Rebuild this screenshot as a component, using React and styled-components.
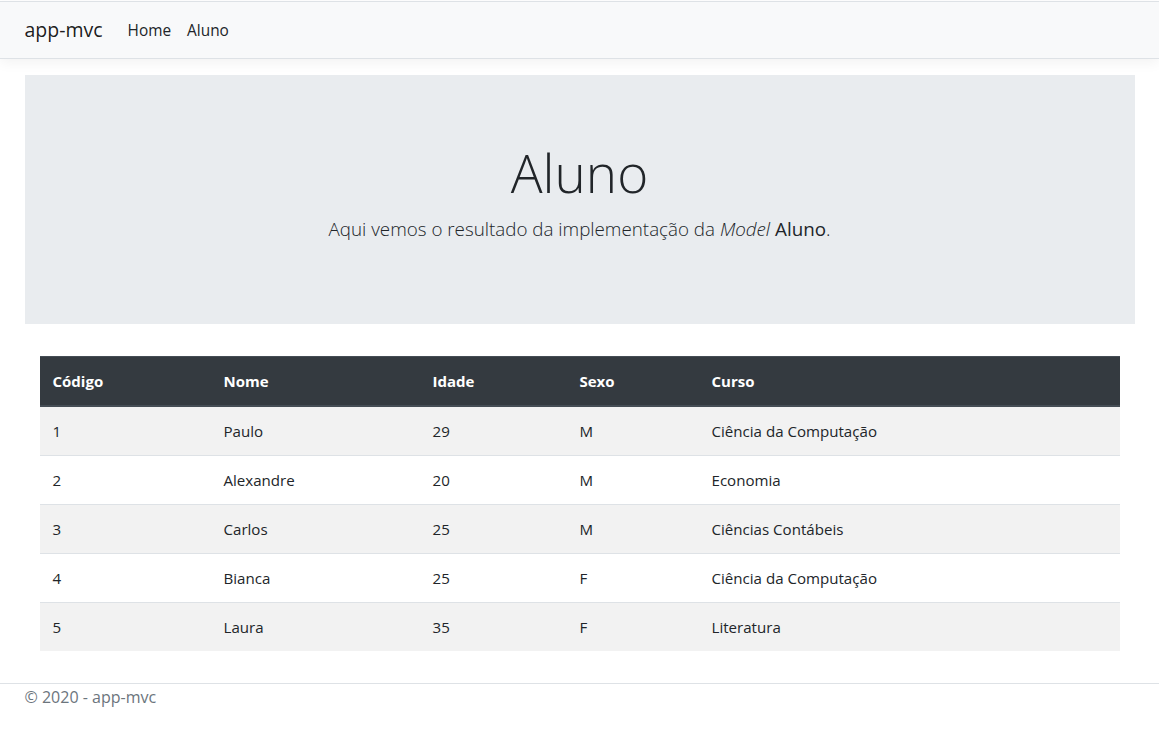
import React from "react";
import styled, { createGlobalStyle } from "styled-components";

const GlobalStyle = createGlobalStyle`
  html, body {
    margin: 0;
    padding: 0;
    background: #fff;
  }
  body {
    font-family: "Open Sans", "Noto Sans", "Liberation Sans", sans-serif;
    font-size: 15px;
    line-height: 1.6;
    color: #212529;
  }
  * {
    box-sizing: border-box;
  }
`;

const Container = styled.div`
  width: 100%;
  max-width: 1140px;
  margin: 0 auto;
  padding: 0 15px;
`;

const Header = styled.header`
  margin-top: 1px;
  border-top: 1px solid #dee2e6;
  border-bottom: 1px solid #dee2e6;
  background: #f8f9fa;
  box-shadow: 0 4px 12px rgba(0, 0, 0, 0.05);
  margin-bottom: 16px;
`;

const NavBar = styled(Container)`
  display: flex;
  align-items: center;
  height: 56px;
`;

const Brand = styled.a`
  font-size: 19.5px;
  line-height: 30px;
  color: rgba(0, 0, 0, 0.9);
  text-decoration: none;
  margin-right: 17px;
`;

const NavLink = styled.a`
  padding: 9px 8px 7px;
  font-size: 15.4px;
  line-height: 24px;
  color: #212529;
  text-decoration: none;
`;

const Jumbotron = styled.section`
  background: #e9ecef;
  padding: 64px 32px;
  margin-bottom: 32px;
  text-align: center;
`;

const Title = styled.h1`
  margin: 0 0 8px;
  font-size: 53px;
  font-weight: 300;
  line-height: 1.27;
  color: #212529;
`;

const Lead = styled.p`
  margin: 0 0 16px;
  font-size: 18.8px;
  font-weight: 300;
  line-height: 30px;
  color: #212529;
  strong {
    font-weight: 400;
  }
`;

const TableWrap = styled.div`
  padding: 0 15px 16px;
`;

const Table = styled.table`
  width: 100%;
  border-collapse: collapse;
  margin-bottom: 16px;
  table-layout: fixed;
`;

const Th = styled.th`
  width: ${(p) => p.$w}px;
  text-align: left;
  padding: 12px 12px 12px 13px;
  font-weight: 700;
  font-size: 15px;
  line-height: 24px;
  color: #fff;
  background: #343a40;
  border-top: 1px solid #454d55;
  border-bottom: 2px solid #454d55;
`;

const Row = styled.tr`
  background: ${(p) => (p.$odd ? "#f2f2f2" : "#fff")};
`;

const Td = styled.td`
  padding: 12px 12px 12px 13px;
  font-size: 15.1px;
  line-height: 24px;
  border-top: 1px solid #dee2e6;
`;

const Footer = styled.footer`
  border-top: 1px solid #dee2e6;
  color: #6c757d;
  font-size: 16px;
  line-height: 26px;
`;

const columns = [
  { label: "Código", w: 171 },
  { label: "Nome", w: 209 },
  { label: "Idade", w: 147 },
  { label: "Sexo", w: 132 },
  { label: "Curso", w: 421 },
];

const alunos = [
  [1, "Paulo", 29, "M", "Ciência da Computação"],
  [2, "Alexandre", 20, "M", "Economia"],
  [3, "Carlos", 25, "M", "Ciências Contábeis"],
  [4, "Bianca", 25, "F", "Ciência da Computação"],
  [5, "Laura", 35, "F", "Literatura"],
];

const App = () => {
  return (
    <>
      <GlobalStyle />
      <Header>
        <NavBar>
          <Brand href="#">app-mvc</Brand>
          <NavLink href="#">Home</NavLink>
          <NavLink href="#">Aluno</NavLink>
        </NavBar>
      </Header>
      <Container>
        <main>
          <Jumbotron>
            <Title>Aluno</Title>
            <Lead>
              Aqui vemos o resultado da implementação da <em>Model</em>{" "}
              <strong>Aluno</strong>.
            </Lead>
          </Jumbotron>
          <TableWrap>
            <Table>
              <thead>
                <tr>
                  {columns.map((c) => (
                    <Th key={c.label} $w={c.w}>
                      {c.label}
                    </Th>
                  ))}
                </tr>
              </thead>
              <tbody>
                {alunos.map((a, i) => (
                  <Row key={a[0]} $odd={i % 2 === 0}>
                    {a.map((v, j) => (
                      <Td key={j}>{v}</Td>
                    ))}
                  </Row>
                ))}
              </tbody>
            </Table>
          </TableWrap>
        </main>
      </Container>
      <Footer>
        <Container>© 2020 - app-mvc</Container>
      </Footer>
    </>
  );
};

export default App;
